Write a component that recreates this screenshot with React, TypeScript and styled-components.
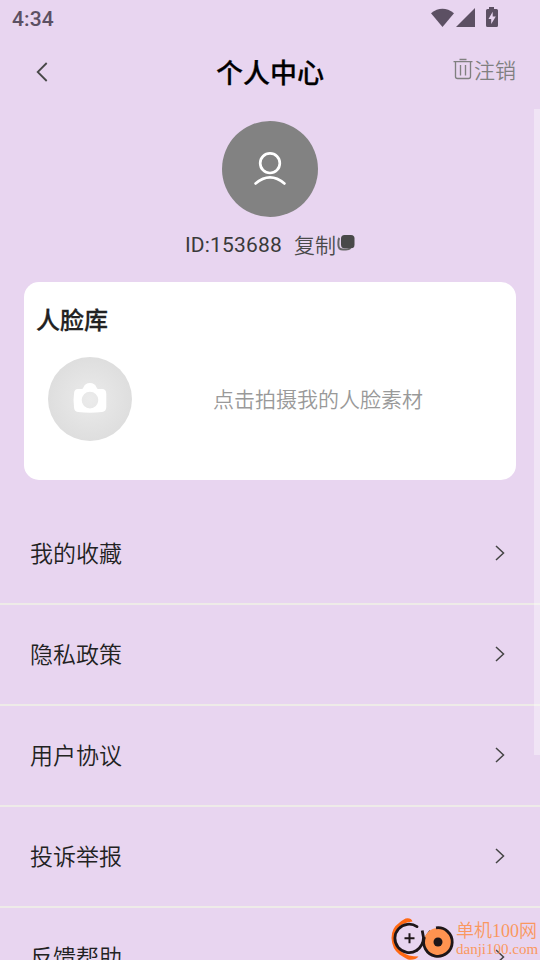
import React from 'react';
import styled, { createGlobalStyle } from 'styled-components';

const GlobalStyle = createGlobalStyle`
  *, *::before, *::after { box-sizing: border-box; }
  html, body { margin: 0; padding: 0; }
  body {
    overflow: hidden;
    background: #e8d5f0;
    font-family: Roboto, 'Noto Sans CJK SC', sans-serif;
    color: #222;
  }
`;

const Screen = styled.main`
  position: relative;
  display: flex;
  flex-direction: column;
  width: 540px;
  height: 960px;
  overflow: hidden;
  background: #e8d5f0;
`;

const StatusBar = styled.header`
  display: flex;
  flex: none;
  align-items: center;
  justify-content: space-between;
  height: 36px;
  padding: 2px 41px 0 12px;
  color: #5c5063;
`;

const Clock = styled.span`
  font-size: 21px;
  line-height: 24px;
  font-weight: 500;
  letter-spacing: 0.1px;
`;

const StatusIcons = styled.svg`
  display: block;
  width: 68px;
  height: 22px;
  margin-top: -2px;
`;

const TitleBar = styled.nav`
  display: grid;
  flex: none;
  grid-template-columns: 1fr auto 1fr;
  align-items: center;
  height: 72px;
  padding: 0 24px;
`;

const BackButton = styled.button`
  display: flex;
  padding: 0 12px;
  border: 0;
  background: none;
`;

const Title = styled.h1`
  margin: 3px 0 0;
  font-size: 27px;
  line-height: 36px;
  font-weight: 500;
  color: #000;
  -webkit-text-stroke: 0.25px currentColor;
`;

const LogoutButton = styled.button`
  display: flex;
  justify-self: end;
  align-items: center;
  margin-top: -3px;
  padding: 0;
  border: 0;
  background: none;
  font: inherit;
  font-family: Roboto, 'Noto Sans CJK SC DemiLight', 'Noto Sans CJK SC', sans-serif;
  font-size: 21px;
  font-weight: 350;
  line-height: 30px;
  color: #808080;
`;

const TrashIcon = styled.svg`
  width: 21px;
  height: 24px;
  margin-top: -4px;
`;

const Content = styled.div`
  display: flex;
  flex: 1;
  flex-direction: column;
  min-height: 0;
  padding-top: 13px;
`;

const Profile = styled.section`
  display: flex;
  flex: none;
  flex-direction: column;
  align-items: center;
`;

const Avatar = styled.div`
  display: flex;
  align-items: center;
  justify-content: center;
  width: 96px;
  height: 96px;
  padding-bottom: 1px;
  border-radius: 50%;
  background: #828282;
`;

const IdRow = styled.div`
  display: flex;
  align-items: center;
  height: 30px;
  margin-top: 13px;
  font-size: 21px;
  line-height: 30px;
  letter-spacing: 0.2px;
  color: #3a3a3a;
`;

const CopyButton = styled.button`
  display: flex;
  align-items: center;
  margin-left: 12px;
  padding: 0;
  border: 0;
  background: none;
  font: inherit;
  font-weight: 350;
  letter-spacing: 0;
  color: #4a4a4a;
`;

const CopyLabel = styled.span`
  padding-top: 1px;
`;

const CopyIcon = styled.svg`
  width: 19px;
  height: 18px;
  margin-top: -4px;
`;

const FaceCard = styled.section`
  flex: none;
  height: 198px;
  margin: 22px 24px 24px;
  padding: 21px 12px 0;
  border-radius: 15px;
  background: #fff;
`;

const CardTitle = styled.h2`
  margin: 0;
  font-size: 24px;
  line-height: 36px;
  font-weight: 500;
  color: #222;
  -webkit-text-stroke: 0.25px currentColor;
`;

const FaceRow = styled.div`
  display: grid;
  grid-template-columns: 84px 1fr;
  align-items: center;
  margin-top: 18px;
  padding: 0 12px;
`;

const CameraButton = styled.button`
  display: flex;
  align-items: center;
  justify-content: center;
  width: 84px;
  height: 84px;
  padding: 0 0 2px;
  border: 0;
  border-radius: 50%;
  background: radial-gradient(circle closest-side, #ebebeb, #dedede);
`;

const Hint = styled.span`
  padding: 2px 0 0 81px;
  font-size: 21px;
  font-weight: 350;
  line-height: 30px;
  white-space: nowrap;
  color: #999;
`;

const MenuList = styled.ul`
  flex: none;
  margin: 0;
  padding: 0;
  list-style: none;
`;

const MenuRow = styled.li`
  display: flex;
  align-items: center;
  justify-content: space-between;
  height: 101px;
  padding: 0 35px 0 30px;
  border-bottom: 2px solid #eeebe8;
  font-size: 23px;
  font-weight: 350;
  line-height: 34px;
  color: #222;
`;

const MenuLabel = styled.span`
  padding-top: 2px;
`;

const ChevronIcon = styled.svg`
  width: 10px;
  height: 16px;
  margin-top: -1px;
`;

const ScrollThumb = styled.div`
  position: absolute;
  top: 109px;
  right: 0;
  width: 6px;
  height: 646px;
  background: rgba(255, 255, 255, 0.36);
`;

const Watermark = styled.aside`
  position: absolute;
  right: 0;
  bottom: 0;
  display: flex;
  width: 150px;
  height: 44px;
  color: #fa985f;
`;

const WatermarkText = styled.div`
  display: flex;
  flex-direction: column;
  width: 84px;
  font-family: 'Liberation Serif', 'Noto Sans CJK SC', serif;
  white-space: nowrap;
`;

const SiteName = styled.span`
  margin-top: 3px;
  font-size: 18px;
  font-weight: 350;
  line-height: 24px;
`;

const SiteUrl = styled.span`
  font-size: 15px;
  line-height: 13px;
`;

const menuItems = ['我的收藏', '隐私政策', '用户协议', '投诉举报', '反馈帮助'];

function Chevron() {
  return (
    <ChevronIcon viewBox="0 0 10 16" fill="none" stroke="#444" strokeWidth="1.5">
      <path d="M1 1L8.5 8L1 15" />
    </ChevronIcon>
  );
}

export default function App() {
  return (
    <>
      <GlobalStyle />
      <Screen>
        <StatusBar>
          <Clock>4:34</Clock>
          <StatusIcons viewBox="0 0 68 22" fill="currentColor">
            <path d="M0 6.2Q11.4-2.6 23 6.2L11.5 20Z" />
            <path d="M25 20H44V1Z" />
            <path
              fillRule="evenodd"
              d="M58 0H63V2H65.5Q67 2 67 3.5V18.5Q67 20 65.5 20H56.5Q55 20 55 18.5V3.5Q55 2 56.5 2H58ZM61.7 4.8L57.5 12H60.2V17L64.8 9.5H61.7Z"
            />
          </StatusIcons>
        </StatusBar>
        <TitleBar>
          <BackButton aria-label="返回">
            <svg width="12" height="20" viewBox="0 0 12 20" fill="none" stroke="#484848" strokeWidth="1.8">
              <path d="M10.7 1L1.7 10L10.7 19" />
            </svg>
          </BackButton>
          <Title>个人中心</Title>
          <LogoutButton>
            <TrashIcon viewBox="0 0 21 24" fill="none" stroke="currentColor" strokeWidth="1.35">
              <path d="M6.5 2.5H13.5M.5 4.6H19.5M2.5 4.6V19.5Q2.5 21.5 4.5 21.5H15.5Q17.5 21.5 17.5 19.5V4.6M7.5 8V18.5M12.5 8V18.5" />
            </TrashIcon>
            注销
          </LogoutButton>
        </TitleBar>
        <Content>
          <Profile>
            <Avatar>
              <svg width="34" height="36" viewBox="0 0 34 36" fill="none" stroke="#fff" strokeWidth="2.7">
                <circle cx="17" cy="12.2" r="9.8" />
                <path d="M2.6 32.5Q17 20.4 31.4 32.5" strokeLinecap="round" />
              </svg>
            </Avatar>
            <IdRow>
              ID:153688
              <CopyButton>
                <CopyLabel>复制</CopyLabel>
                <CopyIcon viewBox="0 0 19 18">
                  <path d="M3.4 4Q2.4 5 2.4 8V11Q2.4 15.5 7 15.5H10Q13 15.5 14.5 14" fill="none" stroke="#666" strokeWidth="2" />
                  <rect x="5" y="1" width="13.5" height="13.2" rx="3.5" fill="#494949" />
                </CopyIcon>
              </CopyButton>
            </IdRow>
          </Profile>
          <FaceCard>
            <CardTitle>人脸库</CardTitle>
            <FaceRow>
              <CameraButton aria-label="拍摄">
                <svg width="34" height="32" viewBox="0 0 34 32">
                  <path
                    fill="#fff"
                    fillRule="evenodd"
                    d="M5 7H8.5Q10 7 10.4 5.5Q12 1 17 1Q22 1 23.6 5.5Q24 7 25.5 7H29Q33.3 7 33.3 12V25Q33.3 29.5 29 30Q17 31.5 5 30Q1 29.5 1 25Q0 18 1 12Q1 7 5 7ZM17 9.8A8.3 8.3 0 1 0 17 26.4A8.3 8.3 0 1 0 17 9.8Z"
                  />
                </svg>
              </CameraButton>
              <Hint>点击拍摄我的人脸素材</Hint>
            </FaceRow>
          </FaceCard>
          <MenuList>
            {menuItems.map((label) => (
              <MenuRow key={label}>
                <MenuLabel>{label}</MenuLabel>
                <Chevron />
              </MenuRow>
            ))}
          </MenuList>
        </Content>
        <ScrollThumb />
        <Watermark>
          <svg width="66" height="44" viewBox="0 0 66 44" fill="none">
            <path d="M22.5 5.5Q21 1.5 15.5 2.6Q12 4.5 9 7Q1.5 12 1.5 22Q2 33 9.5 38.5Q15 42 18 43.5Q25 44.5 28.5 40.5Q18 40.5 12 36Q4 30 4.5 21Q5 12 13 8Q18 5.5 22.5 5.5Z" fill="#ff6813" />
            <path d="M27 10.6A14.2 14.2 0 1 0 26.5 34.5" stroke="#1e1619" strokeWidth="2.8" strokeLinecap="round" />
            <path d="M26.5 34.5Q33.5 29.5 33.5 21.5L32.2 14.5M34.5 24L40.5 15" stroke="#1e1619" strokeWidth="2.8" />
            <circle cx="48" cy="26" r="14" fill="#ff9350" />
            <path d="M46 11.8A14.3 14.3 0 1 1 34.5 21" stroke="#1e1619" strokeWidth="2.8" />
            <circle cx="48" cy="26" r="4.5" fill="#1e1619" />
            <path d="M14.5 22.2H24.5M19.5 17.2V27.2" stroke="#1e1619" strokeWidth="2" />
          </svg>
          <WatermarkText>
            <SiteName>单机100网</SiteName>
            <SiteUrl>danji100.com</SiteUrl>
          </WatermarkText>
        </Watermark>
      </Screen>
    </>
  );
}
